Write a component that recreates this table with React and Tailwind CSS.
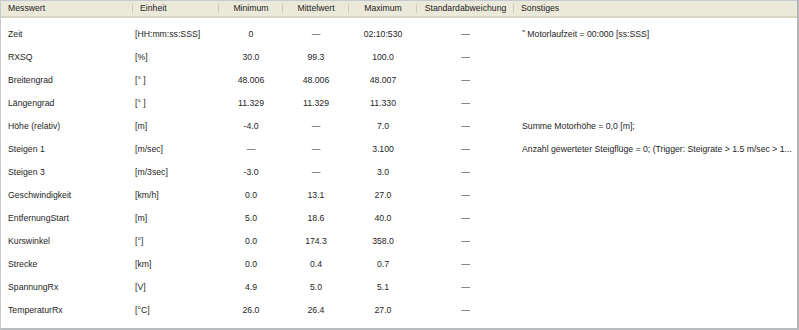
import React from "react";

const cols = [
  { label: "Messwert", w: "w-[132px]", align: "left" },
  { label: "Einheit", w: "w-[86px]", align: "left" },
  { label: "Minimum", w: "w-[64px]", align: "center" },
  { label: "Mittelwert", w: "w-[66px]", align: "center" },
  { label: "Maximum", w: "w-[68px]", align: "center" },
  { label: "Standardabweichung", w: "w-[97px]", align: "center" },
  { label: "Sonstiges", w: "flex-1 min-w-0", align: "left" },
];

const D = "—";
const rows = [
  ["Zeit", "[HH:mm:ss:SSS]", "0", D, "02:10:530", D, "˜ Motorlaufzeit = 00:000 [ss:SSS]"],
  ["RXSQ", "[%]", "30.0", "99.3", "100.0", D, ""],
  ["Breitengrad", "[° ]", "48.006", "48.006", "48.007", D, ""],
  ["Längengrad", "[° ]", "11.329", "11.329", "11.330", D, ""],
  ["Höhe (relativ)", "[m]", "-4.0", D, "7.0", D, "Summe Motorhöhe = 0,0 [m];"],
  ["Steigen 1", "[m/sec]", D, D, "3.100", D, "Anzahl gewerteter Steigflüge = 0; (Trigger: Steigrate > 1.5 m/sec > 1..."],
  ["Steigen 3", "[m/3sec]", "-3.0", D, "3.0", D, ""],
  ["Geschwindigkeit", "[km/h]", "0.0", "13.1", "27.0", D, ""],
  ["EntfernungStart", "[m]", "5.0", "18.6", "40.0", D, ""],
  ["Kurswinkel", "[°]", "0.0", "174.3", "358.0", D, ""],
  ["Strecke", "[km]", "0.0", "0.4", "0.7", D, ""],
  ["SpannungRx", "[V]", "4.9", "5.0", "5.1", D, ""],
  ["TemperaturRx", "[°C]", "26.0", "26.4", "27.0", D, ""],
];

export default function App() {
  return (
    <div
      className="w-[799px] h-[330px] bg-white border-l border-t border-[#c3cad2] border-r-2 border-b-2 border-r-[#b4b4b4] border-b-[#b8bcbf] overflow-hidden text-[8.7px] text-[#1e1e1e]"
      style={{ fontFamily: '"Liberation Sans", Arial, sans-serif' }}
    >
      <div className="flex h-[17px] bg-[#ebe9d9] border-b-2 border-[#d9d5c3]">
        {cols.map((c, i) => (
          <div
            key={i}
            className={`${c.w} relative flex items-center h-full ${
              c.align === "center" ? "justify-center" : "pl-[7px]"
            }`}
          >
            <span className="whitespace-nowrap">{c.label}</span>
            {i < cols.length - 1 && (
              <span className="absolute right-0 top-[3px] bottom-[3px] w-px bg-[#cfcbb9]" />
            )}
          </div>
        ))}
      </div>
      <div className="pt-[5px]">
        {rows.map((r, ri) => (
          <div key={ri} className="flex h-[23px] items-center">
            {r.map((v, ci) => {
              const c = cols[ci];
              let pad = "";
              if (ci === 0) pad = "pl-[7px]";
              else if (ci === 1) pad = "pl-[2px]";
              else if (ci === 6) pad = "pl-[8px]";
              return (
                <div
                  key={ci}
                  className={`${c.w} ${pad} ${
                    c.align === "center" ? "text-center" : "text-left"
                  } whitespace-nowrap`}
                >
                  {v}
                </div>
              );
            })}
          </div>
        ))}
      </div>
    </div>
  );
}
